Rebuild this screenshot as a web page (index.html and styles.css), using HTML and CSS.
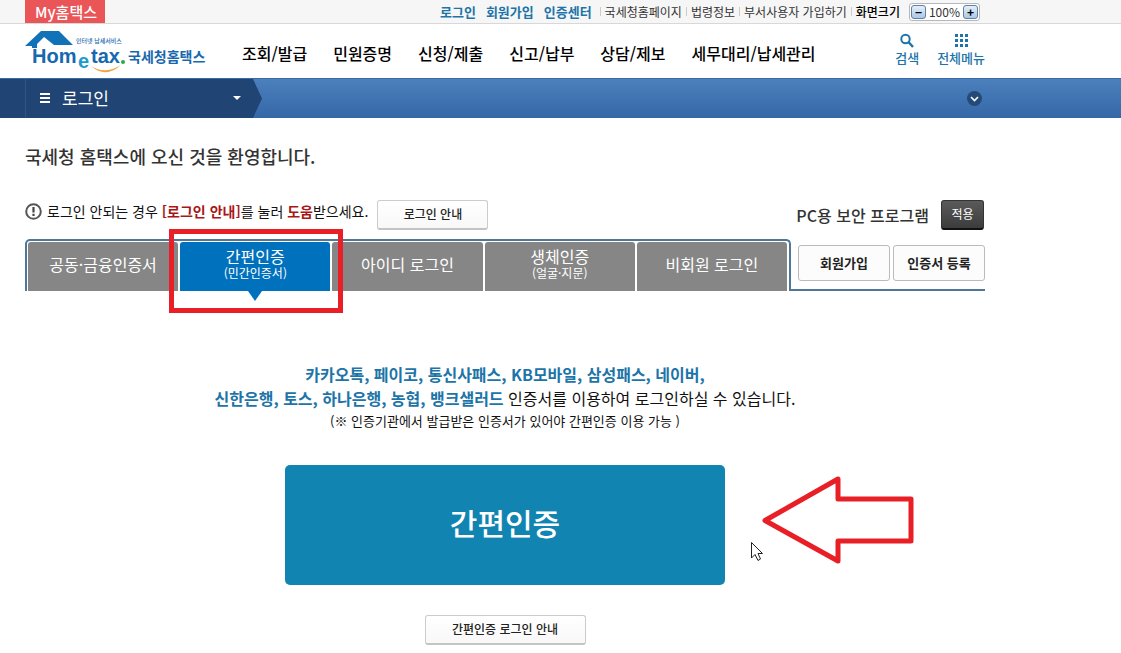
FILE: index.html
```html
<!DOCTYPE html>
<html lang="ko">
<head>
<meta charset="utf-8">
<meta name="viewport" content="width=device-width, initial-scale=1">
<title>국세청 홈택스 - 로그인</title>
<link rel="stylesheet" href="styles.css">
</head>
<body>
<div class="topbar">
  <div class="wrap topbar-inner">
    <a class="my" href="#">My홈택스</a>
    <nav class="util" aria-label="유틸리티">
      <div class="util-strong">
        <a href="#">로그인</a>
        <a href="#">회원가입</a>
        <a href="#">인증센터</a>
      </div>
      <a class="util-link" href="#">국세청홈페이지</a>
      <a class="util-link" href="#">법령정보</a>
      <a class="util-link" href="#">부서사용자 가입하기</a>
      <span class="util-link util-dark">화면크기</span>
      <div class="zoom">
        <button type="button" aria-label="축소">−</button>
        <span>100%</span>
        <button type="button" aria-label="확대">+</button>
      </div>
    </nav>
  </div>
</div>

<header class="header">
  <div class="wrap header-inner">
    <a class="logo" href="#" aria-label="Hometax 국세청홈택스">
      <svg width="182" height="46" viewBox="0 0 182 46">
        <path d="M0 18 L16 3 H34 L48 17 H29 L19 9 L12 16 V20 H7 V18 Z" fill="#1272b8"/>
        <text class="logo-sub" x="51" y="15">인터넷 납세서비스</text>
        <text class="logo-word" x="7" y="35">Hom</text>
        <text class="logo-e" x="53" y="40">e</text>
        <text class="logo-word" x="66" y="35">tax</text>
        <circle cx="98" cy="34" r="2" fill="#2ca84a"/>
        <path d="M66 38 Q80 47 96 37 Q81 51 66 38 Z" fill="#f3a33c"/>
        <text class="logo-name" x="103" y="34">국세청홈택스</text>
      </svg>
    </a>
    <nav class="gnb" aria-label="주 메뉴">
      <a href="#">조회/발급</a>
      <a href="#">민원증명</a>
      <a href="#">신청/제출</a>
      <a href="#">신고/납부</a>
      <a href="#">상담/제보</a>
      <a href="#">세무대리/납세관리</a>
    </nav>
    <div class="tools">
      <a href="#">
        <svg width="16" height="16" viewBox="0 0 16 16" fill="none" stroke="#1c74a8"><circle cx="6.500" cy="6" r="4.200" stroke-width="2"/><path d="M9.500 9 L14 14" stroke-width="2.500"/></svg>
        <span>검색</span>
      </a>
      <a href="#">
        <svg width="16" height="16" viewBox="0 0 16 16" fill="#1c74a8"><path d="M2 1h3v3H2zM7 1h3v3H7zM12 1h3v3h-3zM2 6h3v3H2zM7 6h3v3H7zM12 6h3v3h-3zM2 11h3v3H2zM7 11h3v3H7zM12 11h3v3h-3z"/></svg>
        <span>전체메뉴</span>
      </a>
    </div>
  </div>
</header>

<div class="bar">
  <div class="bar-inner">
    <div class="crumb">
      <button class="crumb-btn" type="button">
        <svg width="10" height="10" viewBox="0 0 10 10" fill="#fff"><path d="M0 0h10v2H0zM0 4h10v2H0zM0 8h10v2H0z"/></svg>
        <span>로그인</span>
        <svg class="caret" width="8" height="4" viewBox="0 0 8 4" fill="#fff"><path d="M0 0h8L4 4z"/></svg>
      </button>
    </div>
    <button class="fold" type="button" aria-label="펼치기">
      <svg width="15" height="15" viewBox="0 0 15 15"><circle cx="7.500" cy="7.500" r="7.500" fill="#244a78"/><path d="M4 6l3.500 3.500L11 6" fill="none" stroke="#fff" stroke-width="1.600"/></svg>
    </button>
  </div>
</div>

<main class="wrap main">
  <h1>국세청 홈택스에 오신 것을 환영합니다.</h1>

  <div class="notice">
    <svg width="17" height="17" viewBox="0 0 17 17"><circle cx="8.500" cy="8.500" r="7.300" fill="none" stroke="#555" stroke-width="2"/><path d="M7.400 4h2.200v5.400H7.400zM7.400 10.700h2.200v2.200H7.400z" fill="#444"/></svg>
    <p>로그인 안되는 경우 <b>[로그인 안내]</b>를 눌러 <b>도움</b>받으세요.</p>
    <button class="btn btn-guide" type="button">로그인 안내</button>
    <div class="security">
      <strong>PC용 보안 프로그램</strong>
      <button class="btn-dark" type="button">적용</button>
    </div>
  </div>

  <div class="auth">
    <div class="tabs" role="tablist">
      <button class="tab" type="button" role="tab">공동·금융인증서</button>
      <button class="tab active" type="button" role="tab" aria-selected="true">간편인증<small>(민간인증서)</small><span class="mark"></span></button>
      <button class="tab" type="button" role="tab">아이디 로그인</button>
      <button class="tab" type="button" role="tab">생체인증<small>(얼굴·지문)</small></button>
      <button class="tab" type="button" role="tab">비회원 로그인</button>
    </div>
    <div class="side">
      <button class="btn-side" type="button">회원가입</button>
      <button class="btn-side" type="button">인증서 등록</button>
    </div>
  </div>

  <section class="panel">
    <p class="lead"><b>카카오톡, 페이코, 통신사패스, KB모바일, 삼성패스, 네이버,</b><br><b>신한은행, 토스, 하나은행, 농협, 뱅크샐러드</b> 인증서를 이용하여 로그인하실 수 있습니다.</p>
    <p class="note">(※ 인증기관에서 발급받은 인증서가 있어야 간편인증 이용 가능 )</p>
    <div class="cta">
      <button class="btn-main" type="button">간편인증</button>
      <svg class="arrow" width="170" height="100" viewBox="0 0 170 100">
        <path d="M21 51.500 L94 10 V30 H167 V72 H94 V92 Z" fill="none" stroke="#e81f27" stroke-width="5" stroke-linejoin="round"/>
        <path d="M7.500 73.500 V89 L11 85.500 L14 91.500 L16.500 90 L14 84.500 H18.500 Z" fill="#fff" stroke="#222"/>
      </svg>
    </div>
    <button class="btn btn-help" type="button">간편인증 로그인 안내</button>
  </section>
</main>
</body>
</html>
```

FILE: styles.css
```css
* { box-sizing: border-box; }
body {
  margin: 0;
  background: #fff;
  color: #111;
  font-family: "Noto Sans CJK KR", sans-serif;
  font-size: 12px;
}
a { color: inherit; text-decoration: none; white-space: nowrap; }
button { font-family: inherit; padding: 0; border: 0; background: none; cursor: pointer; white-space: nowrap; }
h1, p { margin: 0; }
svg { display: block; flex: none; }
.wrap { max-width: 985px; padding-left: 25px; }

.topbar { background: #f6f6f6; border-bottom: 1px solid #d8d8d8; }
.topbar-inner { display: flex; justify-content: space-between; }
.my {
  padding: 0 8px 0 10px;
  background: #ea5658;
  color: #fff;
  font-size: 15px;
  font-weight: 500;
  line-height: 23px;
}
.util { display: flex; align-items: center; padding-right: 5px; line-height: 16px; color: #333; }
.util-strong { display: flex; gap: 10px; margin-right: 4px; color: #1c74a8; font-size: 13px; font-weight: 700; }
.util-link { display: flex; align-items: center; white-space: nowrap; }
.util-link::before { content: ""; width: 1px; height: 9px; margin: 0 4px; background: #ccc; }
.util-dark { color: #000; font-weight: 500; }
.zoom {
  display: flex;
  align-items: center;
  gap: 3px;
  margin-left: 9px;
  padding: 0 1px;
  border: 1px solid #b4b9c0;
  border-radius: 3px;
  background: #fff;
}
.zoom button {
  width: 15px;
  height: 14px;
  border: 1px solid #66809c;
  border-radius: 3px;
  background: linear-gradient(#e4f0fb, #a9c8e8);
  font-size: 12px;
  font-weight: 700;
  line-height: 11px;
}

.header-inner { display: flex; align-items: center; height: 54px; }
.logo-word, .logo-e { font-family: "Liberation Sans", sans-serif; font-weight: 700; font-size: 20px; fill: #1768ae; }
.logo-e { fill: #1d9bd0; }
.logo-sub { font-size: 6px; font-weight: 500; fill: #1768ae; }
.logo-name { font-size: 14px; font-weight: 700; fill: #1768ae; }
.gnb { display: flex; gap: 26px; margin-left: 35px; padding-top: 4px; color: #000; font-size: 16px; font-weight: 500; line-height: 24px; }
.tools { display: flex; gap: 18px; margin-left: auto; color: #1c74a8; font-size: 13px; font-weight: 500; line-height: 18px; }
.tools a { display: flex; flex-direction: column; align-items: center; padding-bottom: 2px; }

.bar { background: linear-gradient(#4a80bd, #3667a6); border-top: 1px solid #3b6ba5; }
.bar-inner { display: flex; align-items: center; justify-content: space-between; max-width: 982px; }
.crumb {
  width: 262px;
  padding: 0 21px 0 25px;
  background: #204473;
  clip-path: polygon(0 0, 253px 0, 100% 50%, 253px 100%, 0 100%);
}
.crumb-btn {
  display: flex;
  align-items: center;
  gap: 12px;
  width: 100%;
  height: 39px;
  padding: 0 0 2px 14px;
  border-left: 1px solid #2f558a;
  color: #fff;
  font-size: 17px;
}
.caret { margin-left: auto; }

.main { padding-bottom: 8px; }
h1 { padding-top: 24px; color: #333; font-size: 18px; font-weight: 500; line-height: 28px; }
.notice { display: flex; align-items: center; gap: 5px; margin-top: 30px; }
.notice svg, .notice p { margin-bottom: 8px; }
.notice p { padding-right: 4px; font-size: 14px; line-height: 20px; white-space: nowrap; }
.notice b { color: #a81616; font-weight: 700; }
.btn {
  height: 30px;
  padding-bottom: 2px;
  border: 1px solid #ccc;
  border-bottom: 2px solid #c4c4c4;
  border-radius: 3px;
  background: linear-gradient(#fff, #f8f8f8);
  color: #222;
  font-size: 12px;
  font-weight: 500;
  line-height: 24px;
}
.btn-guide { width: 111px; }
.security { display: flex; align-items: center; gap: 12px; margin-left: auto; padding-right: 1px; color: #333; font-size: 16px; }
.security strong { font-weight: 500; white-space: nowrap; }
.btn-dark {
  width: 43px;
  height: 30px;
  padding-bottom: 2px;
  border: 1px solid #333;
  border-bottom: 2px solid #111;
  border-radius: 3px;
  background: linear-gradient(#5a5a5a, #3c3c3c);
  color: #fff;
  font-size: 12px;
}

.auth { display: flex; margin-top: 9px; }
.tabs {
  display: grid;
  flex: 0 1 766px;
  grid-template-columns: repeat(5, 1fr);
  gap: 2px;
  padding: 1px 2px 0 1px;
  border: 2px solid #4f7898;
  border-bottom: 0;
  border-radius: 5px 5px 0 0;
}
.tab {
  position: relative;
  min-height: 49px;
  padding-bottom: 5px;
  border-radius: 3px 3px 0 0;
  background: #868686;
  color: #fff;
  font-size: 16px;
  line-height: 18px;
}
.tab small { display: block; font-size: 12px; line-height: 16px; }
.tab.active { background: #0071bc; }
.tab.active::after {
  content: "";
  position: absolute;
  top: 100%;
  left: 50%;
  margin-left: -7px;
  border: 7px solid transparent;
  border-top: 10px solid #0071bc;
  border-bottom: 0;
}
.mark { position: absolute; z-index: 1; inset: -13px -13px -22px -11px; border: 5px solid #e81f27; }
.side {
  display: flex;
  flex: 1;
  gap: 3px;
  padding: 6px 0 8px 7px;
  border-bottom: 2px solid #4f7898;
}
.btn-side {
  flex: 1;
  padding-bottom: 2px;
  border: 1px solid #bbb;
  border-radius: 3px;
  background: #fcfcfc;
  color: #222;
  font-size: 13px;
  font-weight: 700;
}

.panel { display: flex; flex-direction: column; align-items: center; padding-top: 71px; text-align: center; }
.lead { font-size: 16px; line-height: 24px; }
.lead b { color: #1c74a8; font-weight: 700; }
.note { font-size: 13px; line-height: 22px; }
.cta { position: relative; width: 440px; max-width: 100%; margin: 33px 0 30px; }
.btn-main {
  width: 100%;
  height: 120px;
  padding-bottom: 6px;
  border-radius: 5px;
  background: #1184b1;
  color: #fff;
  font-size: 30px;
  font-weight: 500;
}
.arrow { position: absolute; top: 4px; left: 459px; }
.btn-help { width: 161px; }
```
